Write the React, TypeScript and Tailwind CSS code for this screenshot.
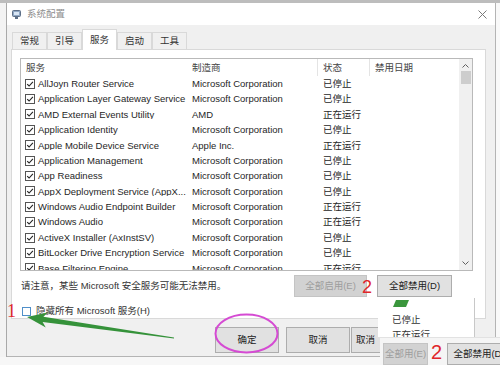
const rows: [string, string, string][] = [
  ["AllJoyn Router Service", "Microsoft Corporation", "已停止"],
  ["Application Layer Gateway Service", "Microsoft Corporation", "已停止"],
  ["AMD External Events Utility", "AMD", "正在运行"],
  ["Application Identity", "Microsoft Corporation", "已停止"],
  ["Apple Mobile Device Service", "Apple Inc.", "正在运行"],
  ["Application Management", "Microsoft Corporation", "已停止"],
  ["App Readiness", "Microsoft Corporation", "已停止"],
  ["AppX Deployment Service (AppX...", "Microsoft Corporation", "已停止"],
  ["Windows Audio Endpoint Builder", "Microsoft Corporation", "正在运行"],
  ["Windows Audio", "Microsoft Corporation", "正在运行"],
  ["ActiveX Installer (AxInstSV)", "Microsoft Corporation", "已停止"],
  ["BitLocker Drive Encryption Service", "Microsoft Corporation", "已停止"],
  ["Base Filtering Engine", "Microsoft Corporation", "正在运行"],
];

const tabs = ["常规", "引导", "服务", "启动", "工具"];

function CheckBox() {
  return (
    <svg width="10" height="10" viewBox="0 0 10 10" className="shrink-0">
      <rect x="0.5" y="0.5" width="9" height="9" fill="white" stroke="#555" />
      <path d="M2.2 5.1 L4.1 7 L7.9 2.9" fill="none" stroke="#222" strokeWidth="1.1" />
    </svg>
  );
}

function Chevron({ down }: { down?: boolean }) {
  return (
    <svg width="7" height="4" viewBox="0 0 7 4">
      <polyline
        points={down ? "0.5,0.5 3.5,3.5 6.5,0.5" : "0.5,3.5 3.5,0.5 6.5,3.5"}
        fill="none"
        stroke="#606060"
        strokeWidth="1"
      />
    </svg>
  );
}

function ServiceList() {
  return (
    <div className="flex h-[213px] w-[453px] border border-[#b9b9b9] bg-white">
      <div className="flex min-w-0 flex-1 flex-col overflow-hidden">
        <div className="flex h-[17px] shrink-0 items-center text-[#444]">
          <div className="w-[168px] pl-[5px]">服务</div>
          <div className="w-[128px] pl-[3px]">制造商</div>
          <div className="flex h-full w-[52px] items-center border-l border-[#e4e4e4] pl-[5px]">状态</div>
          <div className="flex h-full w-[90px] items-center border-l border-[#e4e4e4] pl-[5px]">禁用日期</div>
        </div>
        {rows.map(([name, maker, state]) => (
          <div key={name} className="flex h-[15.4px] shrink-0 items-center text-[#262626]">
            <div className="flex w-[168px] items-center gap-[3px] overflow-hidden whitespace-nowrap pl-[4px]">
              <CheckBox />
              <span>{name}</span>
            </div>
            <div className="w-[128px] whitespace-nowrap pl-[3px]">{maker}</div>
            <div className="w-[52px] whitespace-nowrap pl-[6px]">{state}</div>
            <div className="w-[90px]" />
          </div>
        ))}
      </div>
      <div className="flex w-[13px] flex-col items-center bg-[#f0f0f0] pt-[5px] pb-[5px]">
        <Chevron />
        <div className="mt-[3px] h-[13px] w-[10px] bg-[#cdcdcd]" />
        <div className="flex-1" />
        <Chevron down />
      </div>
    </div>
  );
}

function Button({
  label,
  w,
  h = "h-[22px]",
  disabled,
  left,
}: {
  label: string;
  w: string;
  h?: string;
  disabled?: boolean;
  left?: boolean;
}) {
  return (
    <div
      className={`${w} ${h} flex shrink-0 items-center border ${left ? "justify-start pl-[4px]" : "justify-center"} ${
        disabled
          ? "border-[#c4c4c4] bg-[#d2d2d2] text-[#9d9d9d]"
          : "border-[#adadad] bg-[#e1e1e1] text-[#222]"
      }`}
    >
      {label}
    </div>
  );
}

export default function App() {
  return (
    <div className="relative flex h-[365px] w-[500px] flex-col overflow-hidden bg-[#f7f7f7] font-['Liberation_Sans','Noto_Sans_CJK_SC',sans-serif] text-[9.5px] leading-none">
      <div className="h-[3px] shrink-0 bg-[#bdbdbd]" />

      <div className="flex h-[354px] shrink-0">
        {/* bit of the window behind */}
        <div className="w-[7px] shrink-0 border-r border-[#a9a9a9] bg-[#f3f3f3]" />

        <div className="flex w-[489px] shrink-0 flex-col border-r border-b border-[#b4b4b4] bg-[#f0f0f0]">
          {/* title bar */}
          <div className="flex h-[22px] shrink-0 items-center bg-white">
            <svg width="9" height="9" viewBox="0 0 9 9" className="ml-[5px]">
              <rect x="0.5" y="0.5" width="8" height="6" rx="1" fill="#8fa7c4" stroke="#5d6f87" />
              <rect x="2" y="2" width="5" height="3" fill="#d9e6f5" />
              <rect x="3" y="7" width="3" height="2" fill="#5d6f87" />
            </svg>
            <span className="ml-[6px] text-[#8d8d8d]">系统配置</span>
            <div className="flex-1" />
            <svg width="9" height="9" viewBox="0 0 9 9" className="mr-[8px]">
              <path d="M0.5 0.5 L8.5 8.5 M8.5 0.5 L0.5 8.5" stroke="#7a7a7a" strokeWidth="1" />
            </svg>
          </div>

          {/* tabs */}
          <div className="flex h-[24px] shrink-0 items-end pl-[5px]">
            {tabs.map((t) => (
              <div
                key={t}
                className={`flex w-[35px] items-center justify-center border border-b-0 border-[#d9d9d9] text-[#333] ${
                  t === "服务" ? "relative z-10 -mb-px h-[21px] bg-white" : "h-[17px] bg-[#f0f0f0]"
                }`}
              >
                {t}
              </div>
            ))}
          </div>

          {/* tab page */}
          <div className="ml-[4px] flex h-[270px] w-[475px] shrink-0 flex-col border border-[#d9d9d9] bg-white pt-[8px] pl-[8px]">
            <ServiceList />

            <div className="mt-[4px] flex h-[22px] w-[453px] items-center pr-[21px] text-[#333]">
              <div className="flex-1 pl-[1px]">请注意，某些 Microsoft 安全服务可能无法禁用。</div>
              <Button label="全部启用(E)" w="w-[73px]" disabled />
              <div className="w-[10px]" />
              <Button label="全部禁用(D)" w="w-[75px]" />
            </div>

            <div className="mt-[8px] flex h-[12px] items-center gap-[5px] pl-[2px] text-[#333]">
              <div className="h-[9px] w-[9px] border border-[#4f8fc9] bg-white" />
              <span>隐藏所有 Microsoft 服务(H)</span>
            </div>
          </div>

          {/* dialog buttons */}
          <div className="mt-[8px] flex pl-[208px]">
            <Button label="确定" w="w-[64px]" h="h-[26px]" />
            <div className="w-[7px]" />
            <Button label="取消" w="w-[64px]" h="h-[26px]" />
            <div className="w-[1px]" />
            <Button label="取消" w="w-[64px]" h="h-[26px]" left />
          </div>
        </div>

        <div className="w-[4px] shrink-0 bg-[#f9f9f9]" />
      </div>

      {/* pasted crop: list column and arrow tip */}
      <div className="absolute top-[298px] left-[378px] h-[39px] w-[97px] overflow-hidden border-r border-[#c8c8c8] bg-white text-[#333]">
        <svg width="16" height="8" viewBox="0 0 16 8" className="absolute top-[2px] left-[15px]">
          <polygon points="3,0 16,0 13,7 0,7" fill="#3a963c" />
        </svg>
        <div className="absolute top-[17px] left-[14px]">已停止</div>
        <div className="absolute top-[32px] left-[14px]">正在运行</div>
      </div>

      {/* pasted crop: button row */}
      <div className="absolute top-[337px] left-[380px] flex h-[28px] w-[120px] items-end border-t border-[#e2e2e2] bg-[#f5f5f5]">
        <div className="ml-[3px]">
          <Button label="全部用(E)" w="w-[45px]" disabled />
        </div>
        <div className="ml-[19px]">
          <Button label="全部禁用(D)" w="w-[64px]" />
        </div>
      </div>

      {/* annotations */}
      <div className="absolute top-[302px] left-[7px] font-['Liberation_Serif',serif] text-[18px] text-[#e0262a]">1</div>
      <div className="absolute top-[278px] left-[362px] text-[18px] text-[#e0262a]">2</div>
      <div className="absolute top-[342px] left-[431px] text-[20px] text-[#e0262a]">2</div>

      <svg width="500" height="365" viewBox="0 0 500 365" className="pointer-events-none absolute top-0 left-0">
        <polygon
          points="27,317 47.8,312.5 43.4,316.8 174,337.6 174,338.6 42.6,322 45.8,327.5"
          fill="#35923a"
        />
        <ellipse cx="246.5" cy="333.5" rx="31" ry="19" fill="none" stroke="#d54bd3" strokeWidth="2" />
      </svg>
    </div>
  );
}
